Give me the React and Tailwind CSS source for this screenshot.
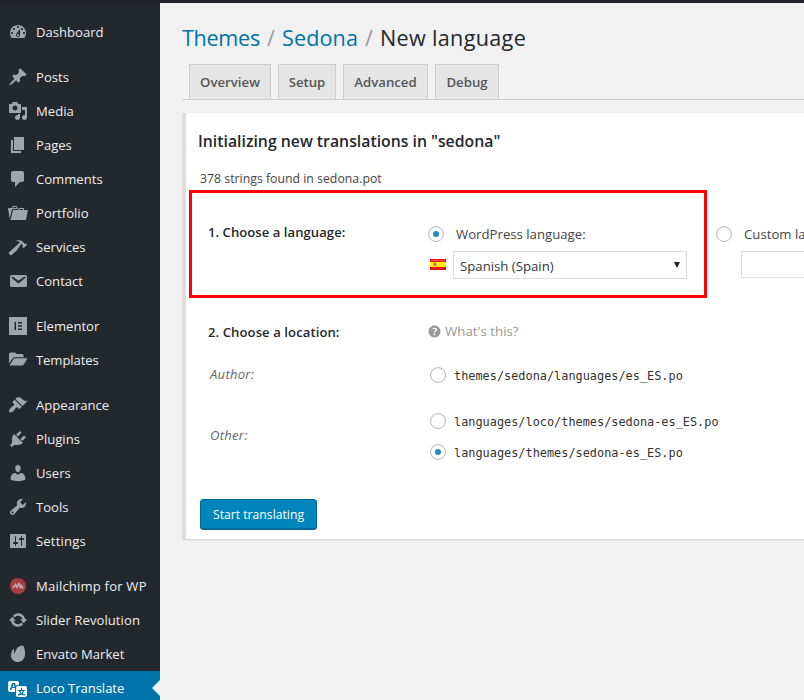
import React, { useState } from 'react';

const paths = {
  dashboard: 'M3.76 16h12.48c1.1-1.37 1.76-3.11 1.76-5 0-4.42-3.58-8-8-8s-8 3.58-8 8c0 1.89.66 3.63 1.76 5zM10 4c.55 0 1 .45 1 1s-.45 1-1 1-1-.45-1-1 .45-1 1-1zM6 6c.55 0 1 .45 1 1s-.45 1-1 1-1-.45-1-1 .45-1 1-1zm8 0c.55 0 1 .45 1 1s-.45 1-1 1-1-.45-1-1 .45-1 1-1zm-5.37 5.55L12 7v6c0 1.1-.9 2-2 2s-2-.9-2-2c0-.57.24-1.08.63-1.45zM4 10c.55 0 1 .45 1 1s-.45 1-1 1-1-.45-1-1 .45-1 1-1zm12 0c.55 0 1 .45 1 1s-.45 1-1 1-1-.45-1-1 .45-1 1-1zm-5 3c0-.55-.45-1-1-1s-1 .45-1 1 .45 1 1 1 1-.45 1-1z',
  post: 'M10.44 3.02l1.82-1.82 6.36 6.35-1.83 1.82c-1.05-.68-2.48-.57-3.41.36l-.75.75c-.92.93-1.04 2.35-.35 3.41l-1.83 1.82-2.41-2.41-2.8 2.79c-.42.42-3.38 2.71-3.8 2.29s1.86-3.39 2.28-3.81l2.79-2.79L4.1 9.36l1.83-1.82c1.05.69 2.48.57 3.4-.36l.75-.75c.93-.92 1.05-2.35.36-3.41z',
  media: 'M13 11V4c0-.55-.45-1-1-1h-1.67L9 1H5L3.67 3H2c-.55 0-1 .45-1 1v7c0 .55.45 1 1 1h10c.55 0 1-.45 1-1zM7 4.5c1.38 0 2.5 1.12 2.5 2.5S8.38 9.5 7 9.5 4.5 8.38 4.5 7 5.62 4.5 7 4.5zM14 6h5v10.5c0 1.38-1.12 2.5-2.5 2.5S14 17.88 14 16.5s1.12-2.5 2.5-2.5c.17 0 .34.02.5.05V9h-3V6zm-4 8.05V13h2v3.5c0 1.38-1.12 2.5-2.5 2.5S7 17.88 7 16.5 8.12 14 9.5 14c.17 0 .34.02.5.05z',
  page: 'M6 15V2h10v13H6zm-1 1h8v2H3V5h2v11z',
  comments: 'M5 2h9c1.1 0 2 .9 2 2v7c0 1.1-.9 2-2 2h-2l-5 5v-5H5c-1.1 0-2-.9-2-2V4c0-1.1.9-2 2-2z',
  portfolio: 'M4 5H.78c-.37 0-.74.32-.69.84l1.56 9.99S3.5 8.47 3.86 6.7c.11-.53.61-.7.98-.7H10s-.7-2.08-.77-2.31C9.11 3.25 8.89 3 8.45 3H5.14c-.36 0-.7.23-.8.64C4.25 4.04 4 5 4 5zm4.88 0h-4s.42-1 .87-1h2.13c.48 0 1 1 1 1zM2.67 16.25c-.31.47-.76.75-1.26.75h15.73c.54 0 .92-.31 1.03-.83.44-2.19 1.68-8.44 1.68-8.44.07-.5-.3-.73-.62-.73H16V5.53c0-.16-.26-.53-.66-.53h-3.76c-.52 0-.87.58-.87.58L10 7H5.59c-.32 0-.63.19-.69.5 0 0-1.59 6.7-1.72 7.33-.07.37-.22.99-.51 1.42zM15.38 7H11s.58-1 1.13-1h2.29c.71 0 .96 1 .96 1z',
  hammer: 'M17.7 6.32l1.41 1.42-3.47 3.41-1.42-1.42.84-.82c-.32-.76-.81-1.57-1.51-2.31l-4.61 6.59-5.26 4.7c-.39.39-1.02.39-1.42 0l-1.2-1.21c-.39-.39-.39-1.02 0-1.41l10.97-9.92c-1.37-.86-3.21-1.46-5.67-1.48 2.7-.82 4.95-.93 6.58-.3 1.7.66 2.82 2.2 3.91 3.58z',
  email: 'M3.87 4h13.25C18.37 4 19 4.59 19 5.79v8.42c0 1.19-.63 1.79-1.88 1.79H3.87c-1.25 0-1.88-.6-1.88-1.79V5.79c0-1.2.63-1.79 1.88-1.79zm6.62 8.6l6.74-5.53c.24-.2.43-.66.13-1.07-.29-.41-.82-.42-1.17-.17l-5.7 3.86L4.8 5.83c-.35-.25-.88-.24-1.17.17-.3.41-.11.87.13 1.07z',
  elementor: 'M1 1h18v18H1zM6.5 6v8h1.5V6zM10 6v1.6h4V6zM10 9.2v1.6h4V9.2zM10 12.4V14h4v-1.6z',
  folder: 'M1 13.6V4.4C1 3.3 1.8 2.5 2.9 2.5h3.5c.9 0 1.7.7 1.9 1.6h5.5c1 0 1.8.8 1.8 1.8v1.3H7.2c-1.2 0-2.3.6-2.9 1.6zM1.6 15.5l3.7-6.3c.4-.6 1-1 1.8-1h11.3c.6 0 .9.6.6 1.1l-3.2 5.3c-.3.6-.9.9-1.6.9z',
  appearance: 'M14.48 11.06L7.41 3.99l1.5-1.5c.5-.56 2.3-.47 3.51.32 1.21.8 1.43 1.28 2.91 2.1 1.18.64 2.45 1.26 4.45.85zm-.71.71L6.7 4.7 4.93 6.47c-.39.39-.39 1.02 0 1.41l1.06 1.06c.39.39.39 1.03 0 1.42-.6.6-1.43 1.11-2.21 1.69-.35.26-.7.53-1.01.84C1.43 14.23.4 16.08 1.4 17.07c.99 1 2.84-.03 4.18-1.36.31-.31.58-.66.85-1.02.57-.78 1.08-1.61 1.69-2.21.39-.39 1.02-.39 1.41 0l1.06 1.06c.39.39 1.02.39 1.41 0z',
  plugins: 'M13.11 4.36L9.87 7.6 8 5.73l3.24-3.24c.35-.34 1.05-.2 1.56.32.52.51.66 1.21.31 1.55zm-8 1.77l.91-1.12 9.01 9.01-1.19.84c-.71.71-2.63 1.16-3.82 1.16H6.14L4.9 17.26c-.59.59-1.54.59-2.12 0-.59-.58-.59-1.53 0-2.12l1.24-1.24v-3.88c0-1.13.4-3.19 1.09-3.89zm7.26 3.97l3.24-3.24c.34-.35 1.04-.21 1.55.31.52.51.66 1.21.31 1.55l-3.24 3.25z',
  users: 'M10 9.25c-2.27 0-2.73-3.44-2.73-3.44C7 4.02 7.82 2 9.97 2c2.16 0 2.98 2.02 2.71 3.81 0 0-.41 3.44-2.68 3.44zm0 2.57L12.72 10c2.39 0 4.52 2.33 4.52 4.53v2.49s-3.65 1.13-7.24 1.13c-3.65 0-7.24-1.13-7.24-1.13v-2.49c0-2.25 1.94-4.48 4.47-4.48z',
  tools: 'M16.68 9.77c-1.34 1.34-3.3 1.67-4.95.99l-5.41 6.52c-.99.99-2.59.99-3.58 0s-.99-2.59 0-3.57l6.52-5.42c-.68-1.65-.35-3.61.99-4.95 1.28-1.28 3.12-1.62 4.72-1.06l-2.89 2.89 2.82 2.82 2.86-2.87c.53 1.58.18 3.39-1.08 4.65zM3.81 16.21c.4.39 1.04.39 1.43 0 .4-.4.4-1.04 0-1.43-.39-.4-1.03-.4-1.43 0-.39.39-.39 1.03 0 1.43z',
  settings: 'M18 16V4c0-.55-.45-1-1-1H3c-.55 0-1 .45-1 1v12c0 .55.45 1 1 1h14c.55 0 1-.45 1-1zM8 11h1c.55 0 1 .45 1 1s-.45 1-1 1H8v1.5c0 .28-.22.5-.5.5s-.5-.22-.5-.5V13H6c-.55 0-1-.45-1-1s.45-1 1-1h1V5.5c0-.28.22-.5.5-.5s.5.22.5.5V11zm5-2h-1c-.55 0-1-.45-1-1s.45-1 1-1h1V5.5c0-.28.22-.5.5-.5s.5.22.5.5V7h1c.55 0 1 .45 1 1s-.45 1-1 1h-1v5.5c0 .28-.22.5-.5.5s-.5-.22-.5-.5V9z',
  update: 'M10.2 3.28c3.53 0 6.43 2.61 6.92 6h2.08l-3.5 4-3.5-4h2.32c-.45-1.97-2.21-3.45-4.32-3.45-1.45 0-2.73.71-3.54 1.78L4.95 5.66C6.23 4.2 8.11 3.28 10.2 3.28zm-.4 13.44c-3.52 0-6.43-2.61-6.92-6H.8l3.5-4c1.17 1.33 2.33 2.67 3.5 4H5.48c.45 1.97 2.21 3.45 4.32 3.45 1.45 0 2.73-.71 3.54-1.78l1.71 1.95c-1.28 1.46-3.15 2.38-5.25 2.38z',
  leaf: 'M14.6 1.5c1.5.3 2.8 5.2 2.4 9.3-.4 4.2-3 7-6.8 7.2-3.9.2-6.900-2.300-7.200-6-.2-2.500.8-5.300 2.200-6.900.4-.4.9-.2.9.4-.1 1.600.1 3.200.8 4.500.3-4.500 3.700-8.700 7.700-8.500z',
  translate: 'M11 7H9.49c-.63 0-1.25.3-1.59.7L7 5H4.13l-2.39 7h1.69l.74-2H7v4H2c-1.1 0-2-.9-2-2V5c0-1.1.9-2 2-2h7c1.1 0 2 .9 2 2v2zM6.51 9H4.49l1-2.93zM10 8h7c1.1 0 2 .9 2 2v7c0 1.1-.9 2-2 2h-7c-1.1 0-2-.9-2-2v-7c0-1.1.9-2 2-2zm7.25 5v-1.08h-3.17V9.75h-1.16v2.17H9.75V13h1.28c.11.85.56 1.85 1.28 2.62-.87.36-1.89.62-2.31.62-.01.02.22.97.2 1.46.84 0 2.21-.5 3.28-1.15 1.09.65 2.48 1.15 3.34 1.15-.02-.49.2-1.44.2-1.46-.43 0-1.49-.27-2.38-.63.7-.77 1.14-1.77 1.25-2.61h1.36zm-3.81 1.93c-.5-.46-.85-1.13-1.01-1.93h2.09c-.17.8-.51 1.47-1 1.93l-.04.03s-.03-.02-.04-.03z',
  help: 'M17 10c0-3.87-3.14-7-7-7-3.87 0-7 3.13-7 7s3.13 7 7 7c3.86 0 7-3.13 7-7zm-6.3 1.48H9.14v-.43c0-.38.08-.7.24-.98s.46-.57.88-.89c.41-.29.68-.53.81-.71.14-.18.2-.39.2-.62 0-.25-.09-.44-.28-.58-.19-.13-.45-.19-.79-.19-.58 0-1.25.15-2 .45l-.64-1.28c.87-.49 1.8-.74 2.77-.74.81 0 1.45.2 1.92.58.48.39.71.91.71 1.55 0 .43-.09.8-.29 1.11-.19.32-.57.67-1.11 1.06-.38.28-.61.49-.71.63-.1.15-.15.34-.15.57v.47zm-1.47 2.74c-.18-.17-.27-.42-.27-.73 0-.33.08-.58.26-.75s.43-.25.77-.25c.32 0 .57.09.75.26s.27.42.27.74c0 .3-.09.55-.27.72-.18.18-.43.27-.75.27-.33 0-.58-.09-.76-.26z',
};

const menu = [
  [{ label: 'Dashboard', icon: 'dashboard' }],
  [
    { label: 'Posts', icon: 'post' },
    { label: 'Media', icon: 'media' },
    { label: 'Pages', icon: 'page' },
    { label: 'Comments', icon: 'comments' },
    { label: 'Portfolio', icon: 'portfolio' },
    { label: 'Services', icon: 'hammer' },
    { label: 'Contact', icon: 'email' },
  ],
  [
    { label: 'Elementor', icon: 'elementor' },
    { label: 'Templates', icon: 'folder', spacing: 'tracking-[-0.1px]' },
  ],
  [
    { label: 'Appearance', icon: 'appearance' },
    { label: 'Plugins', icon: 'plugins' },
    { label: 'Users', icon: 'users' },
    { label: 'Tools', icon: 'tools' },
    { label: 'Settings', icon: 'settings', spacing: 'tracking-[0.16px]' },
  ],
  [
    { label: 'Mailchimp for WP', icon: 'mailchimp', spacing: 'tracking-[0.18px]' },
    { label: 'Slider Revolution', icon: 'update', spacing: 'tracking-[0.06px]' },
    { label: 'Envato Market', icon: 'leaf' },
    { label: 'Loco Translate', icon: 'translate', spacing: 'tracking-[-0.05px]', active: true },
  ],
];

const tabs = [
  { label: 'Overview', width: 'w-[82px]' },
  { label: 'Setup', width: 'w-[58px]' },
  { label: 'Advanced', width: 'w-[85px]' },
  { label: 'Debug', width: 'w-16' },
];

function Icon({ name, className }) {
  if (name === 'mailchimp') {
    return (
      <svg viewBox="0 0 20 20" className={className}>
        <circle cx="10" cy="10" r="8" fill="#a93c40" />
        <path d="M4.800 12l2.800-3.600 1.200 2.800L11 7.600l1.300 3.600 1-1.600 1.800 3" fill="none" stroke="#b9a9ac" strokeWidth="1.700" />
      </svg>
    );
  }
  return (
    <svg viewBox="0 0 20 20" className={className} fill="currentColor" fillRule="evenodd">
      <path d={paths[name]} />
    </svg>
  );
}

function Flag() {
  return (
    <svg viewBox="0 0 16 11" className="mb-0.5 h-[11px] w-4">
      <path d="M0 0h16v11H0z" fill="#e8101a" />
      <path d="M0 3h16v5H0z" fill="#fdf000" />
      <path d="M1 1h14v1H1z" fill="#f4575c" />
      <path d="M3 4h1v3H3zM6 5h1v2H6z" fill="#d9a08a" />
      <path d="M4 3.500h2v3.500H4z" fill="#dd6a4c" />
    </svg>
  );
}

function Radio({ checked, onClick }) {
  return (
    <button
      onClick={onClick}
      className="flex h-4 w-4 shrink-0 items-center justify-center rounded-full border border-[#b4b9be] bg-white shadow-[inset_0_1px_2px_rgba(0,0,0,0.07)]"
    >
      {checked && <span className="h-1.5 w-1.5 rounded-full bg-[#1e8cbe]" />}
    </button>
  );
}

function Sidebar() {
  return (
    <nav className="w-40 shrink-0 bg-[#23282d] pt-3">
      {menu.map((group, i) => (
        <ul key={i} className="mb-[11px]">
          {group.map((item) => (
            <li
              key={item.label}
              className={`relative flex h-[34px] items-center gap-2 pl-2 text-[13.1px] whitespace-nowrap ${
                item.active ? 'bg-[#0073aa] text-white' : 'text-[#eeeeee]'
              }`}
            >
              <Icon name={item.icon} className={`h-5 w-5 shrink-0 ${item.active ? 'text-white' : 'text-[#a0a5aa]'}`} />
              <span className={`pt-0.5 ${item.spacing || ''}`}>{item.label}</span>
              {item.active && (
                <span className="absolute top-[9px] right-0 border-y-8 border-r-8 border-y-transparent border-r-[#f1f1f1]" />
              )}
            </li>
          ))}
        </ul>
      ))}
    </nav>
  );
}

function PathOption({ path, checked, onClick }) {
  return (
    <div className="flex h-[30px] items-center gap-2 pl-0.5">
      <Radio checked={checked} onClick={onClick} />
      <code className="pt-[3px] font-['DejaVu_Sans_Mono',monospace] text-[11.88px] text-[#333]">{path}</code>
    </div>
  );
}

export default function App() {
  const [mode, setMode] = useState('wp');
  const [location, setLocation] = useState('system');

  return (
    <div className="flex h-[700px] w-[804px] flex-col overflow-hidden bg-[#f1f1f1] font-['Open_Sans',sans-serif] text-[#444]">
      <div className="h-[3px] shrink-0 bg-[#23232b]" />
      <div className="flex min-h-0 flex-1">
        <Sidebar />

        <main className="min-w-0 flex-1 overflow-hidden pl-[22px]">
          <h1 className="flex h-[61px] items-center pt-[9px] text-[21.6px] whitespace-nowrap text-[#23282d]">
            <a className="w-[85px] tracking-[-0.3px] text-[#0073aa]">Themes</a>
            <span className="w-[15px] text-[#999]">/</span>
            <a className="w-[83px] tracking-[0.1px] text-[#0073aa]">Sedona</a>
            <span className="w-[15px] text-[#999]">/</span>
            <span className="tracking-[0.32px]">New language</span>
          </h1>

          {/* tabs */}
          <div className="flex h-9 gap-[7px] border-b border-[#ccc] pl-[7px]">
            {tabs.map((tab) => (
              <a
                key={tab.label}
                className={`flex h-[35px] items-center justify-center border border-b-0 border-[#ccc] bg-[#e5e5e5] pt-0.5 text-[13.2px] font-semibold text-[#555] ${tab.width}`}
              >
                {tab.label}
              </a>
            ))}
          </div>

          {/* panel */}
          <section className="relative mt-[13px] h-[427px] w-[760px] border-b border-l-4 border-b-[#d5d5d5] border-l-[#ddd] bg-white whitespace-nowrap shadow-[0_1px_1px_rgba(0,0,0,0.04)]">
            <h2 className="flex h-14 items-center pt-0.5 pl-3 text-[15.8px] font-semibold text-[#23282d]">
              Initializing new translations in "sedona"
            </h2>
            <p className="flex h-[18px] items-center pt-0.5 pl-3.5 text-[12.3px]">378 strings found in sedona.pot</p>

            <div className="flex pt-[33px] pl-[22px]">
              <h3 className="flex h-6 w-[220px] items-center pt-0.5 text-[13.1px] font-semibold tracking-[0.04px] text-[#23282d]">
                1. Choose a language:
              </h3>
              <div className="w-72">
                <label className="flex h-7 items-center gap-3 text-[13.2px]">
                  <Radio checked={mode === 'wp'} onClick={() => setMode('wp')} />
                  <span className="pt-0.5">WordPress language:</span>
                </label>
                <div className="mt-[3px] flex items-center gap-[7px] pl-0.5">
                  <Flag />
                  <div className="flex h-7 w-[234px] items-center justify-between border border-[#ddd] pr-[5px] pl-1.5 text-[13.2px] text-[#32373c]">
                    <span className="pt-1">Spanish (Spain)</span>
                    <svg viewBox="0 0 8 8" className="h-2 w-2" fill="#222">
                      <path d="M1 1h6L4 7z" />
                    </svg>
                  </div>
                </div>
              </div>
              <div>
                <label className="flex h-7 items-center gap-3 text-[13.2px]">
                  <Radio checked={mode === 'custom'} onClick={() => setMode('custom')} />
                  <span className="pt-0.5">Custom language:</span>
                </label>
                <div className="mt-[3px] ml-[25px] h-[27px] w-32 border border-[#ddd]" />
              </div>
            </div>

            <div className="flex pt-[41px] pl-[22px]">
              <h3 className="flex h-6 w-[220px] items-center pt-0.5 text-[13.1px] font-semibold tracking-[0.08px] text-[#23282d]">
                2. Choose a location:
              </h3>
              <a className="flex h-[23px] items-center gap-1 text-[13.3px] text-[#999]">
                <Icon name="help" className="-mx-0.5 h-[17px] w-[17px]" />
                What's this?
              </a>
            </div>

            <div className="flex items-center pt-4 pl-6">
              <em className="w-[218px] text-[13px] tracking-[0.3px] text-[#666]">Author:</em>
              <PathOption
                path="themes/sedona/languages/es_ES.po"
                checked={location === 'author'}
                onClick={() => setLocation('author')}
              />
            </div>

            <div className="flex items-center pt-4 pl-6">
              <em className="w-[218px] pb-0.5 text-[13px] tracking-[0.3px] text-[#666]">Other:</em>
              <div className="flex flex-col gap-px">
                <PathOption
                  path="languages/loco/themes/sedona-es_ES.po"
                  checked={location === 'loco'}
                  onClick={() => setLocation('loco')}
                />
                <PathOption
                  path="languages/themes/sedona-es_ES.po"
                  checked={location === 'system'}
                  onClick={() => setLocation('system')}
                />
              </div>
            </div>

            <button className="mt-8 ml-3.5 flex h-[31px] w-[117px] items-center justify-center rounded-[3px] border border-[#006799] bg-[#0085ba] pt-0.5 text-[12.2px] text-white shadow-[inset_0_-1px_0_#006799]">
              Start translating
            </button>

            {/* highlight around step 1 */}
            <div className="pointer-events-none absolute top-[77px] left-[3px] h-[108px] w-[518px] border-3 border-[#fe0000]" />
          </section>
        </main>
      </div>
    </div>
  );
}
